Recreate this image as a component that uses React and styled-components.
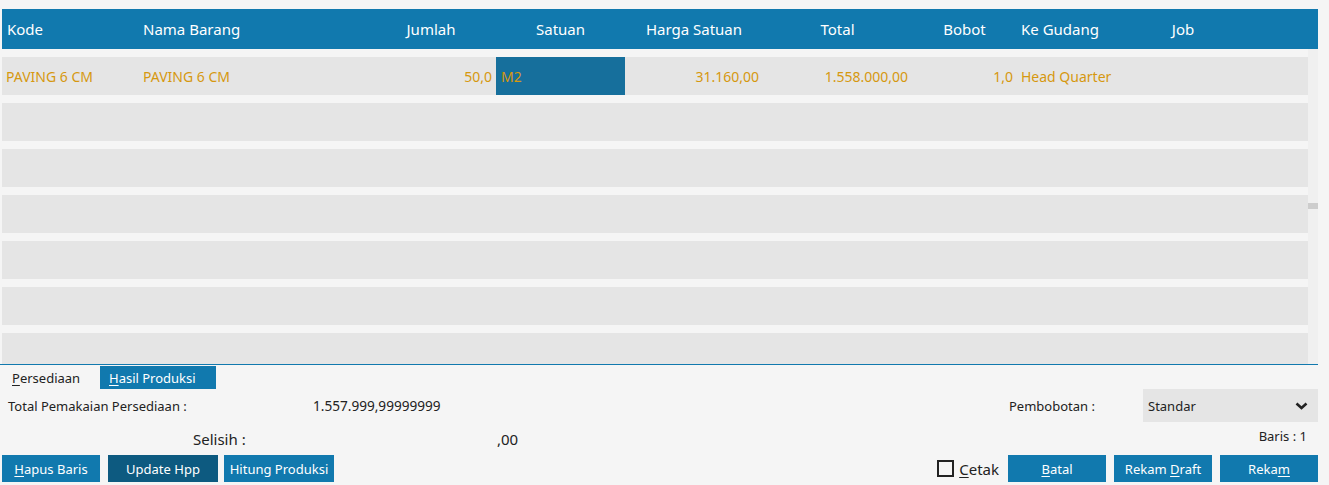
import React from "react";
import styled, { createGlobalStyle } from "styled-components";

const Global = createGlobalStyle`
  html, body { margin: 0; padding: 0; background: #f5f5f5; }
  body { font-family: "Segoe UI", "Noto Sans", "Open Sans", sans-serif; overflow: hidden; }
  * { box-sizing: border-box; }
`;

const COLS = "137px 227px 130px 129px 138px 149px 105px 87px 158px 1fr";

const Page = styled.div`
  width: 1329px;
  height: 485px;
  padding: 9px 11px 0 2px;
  display: flex;
  flex-direction: column;
`;

const Header = styled.div`
  display: grid;
  grid-template-columns: ${COLS};
  height: 40px;
  background: #1179ae;
  color: #fff;
  font-size: 15px;
  align-items: center;
`;

const HCell = styled.div`
  padding: 0 5px 0 ${(p) => p.$pl || 5}px;
  text-align: ${(p) => p.$align || "center"};
  white-space: nowrap;
`;

const Body = styled.div`
  display: flex;
  height: 315px;
  overflow: hidden;
`;

const Rows = styled.div`
  flex: 1;
  display: flex;
  flex-direction: column;
  gap: 8px;
  padding-top: 8px;
`;

const Row = styled.div`
  display: grid;
  grid-template-columns: ${COLS};
  height: 38px;
  flex: 0 0 38px;
  background: #e5e5e5;
  color: #d6980f;
  font-size: 14px;
  align-items: stretch;
`;

const Cell = styled.div`
  display: flex;
  align-items: center;
  justify-content: ${(p) => (p.$right ? "flex-end" : "flex-start")};
  padding: 0 4px 0 ${(p) => p.$pl || 4}px;
  white-space: nowrap;
  background: ${(p) => (p.$sel ? "#166f9c" : "transparent")};
`;

const Track = styled.div`
  width: 10px;
  background: #f0f0f0;
  display: flex;
  flex-direction: column;
  padding-top: 154px;
`;

const Thumb = styled.div`
  height: 6px;
  background: #cdcdcd;
`;

const Divider = styled.div`
  height: 1px;
  background: #1179ae;
  margin-left: -2px;
`;

const Tabs = styled.div`
  display: flex;
  height: 23px;
  margin-left: -2px;
  margin-top: 1px;
`;

const Tab = styled.div`
  width: ${(p) => p.$w}px;
  padding-left: ${(p) => p.$pl}px;
  display: flex;
  align-items: center;
  font-size: 13px;
  color: ${(p) => (p.$active ? "#fff" : "#222")};
  background: ${(p) => (p.$active ? "#1179ae" : "transparent")};
`;

const U = styled.span`
  text-decoration: underline;
  text-underline-offset: 2px;
`;

const Line1 = styled.div`
  display: flex;
  align-items: center;
  height: 33px;
`;

const Label = styled.div`
  font-size: ${(p) => p.$fs || 13}px;
  color: #222;
  width: ${(p) => p.$w}px;
  padding-left: ${(p) => p.$pl || 0}px;
  white-space: nowrap;
`;

const Spacer = styled.div`
  flex: 1;
`;

const Select = styled.div`
  width: 175px;
  height: 33px;
  background: #e5e5e5;
  display: flex;
  align-items: center;
  justify-content: space-between;
  padding: 0 10px 0 5px;
  font-size: 13px;
  color: #222;
`;

const Line2 = styled.div`
  display: flex;
  align-items: center;
  height: 33px;
`;

const Big = styled.div`
  font-size: 15px;
  color: #222;
  width: ${(p) => p.$w}px;
  padding-left: ${(p) => p.$pl || 0}px;
  white-space: nowrap;
`;

const Baris = styled.div`
  font-size: 13px;
  color: #222;
  padding-right: 11px;
  margin-top: -6px;
`;

const Buttons = styled.div`
  display: flex;
  align-items: center;
  height: 27px;
`;

const Btn = styled.div`
  width: ${(p) => p.$w}px;
  margin-right: ${(p) => p.$mr || 0}px;
  height: 27px;
  background: ${(p) => (p.$dark ? "#0d5a80" : "#1179ae")};
  color: #fff;
  font-size: 13px;
  display: flex;
  align-items: center;
  justify-content: center;
  white-space: nowrap;
`;

const Check = styled.div`
  width: 17px;
  height: 17px;
  border: 2px solid #222;
  margin-right: 5px;
`;

const CheckLabel = styled.div`
  font-size: 15px;
  color: #222;
  margin-right: 9px;
`;

const cols = [
  ["Kode", "left"],
  ["Nama Barang", "left", 4],
  ["Jumlah"],
  ["Satuan"],
  ["Harga Satuan"],
  ["Total"],
  ["Bobot"],
  ["Ke Gudang", "left", 4],
  ["Job"],
  [""],
];

export default function App() {
  return (
    <>
      <Global />
      <Page>
        <Header>
          {cols.map(([t, a, pl], i) => (
            <HCell key={i} $align={a} $pl={pl}>
              {t}
            </HCell>
          ))}
        </Header>
        <Body>
          <Rows>
            <Row>
              <Cell>PAVING 6 CM</Cell>
              <Cell>PAVING 6 CM</Cell>
              <Cell $right>50,0</Cell>
              <Cell $sel $pl={5}>M2</Cell>
              <Cell $right>31.160,00</Cell>
              <Cell $right>1.558.000,00</Cell>
              <Cell $right>1,0</Cell>
              <Cell>Head Quarter</Cell>
              <Cell />
              <Cell />
            </Row>
            {[0, 1, 2, 3, 4, 5].map((i) => (
              <Row key={i} />
            ))}
          </Rows>
          <Track>
            <Thumb />
          </Track>
        </Body>
        <Divider />
        <Tabs>
          <Tab $w={100} $pl={12}>
            <span><U>P</U>ersediaan</span>
          </Tab>
          <Tab $w={116} $pl={9} $active>
            <span><U>H</U>asil Produksi</span>
          </Tab>
        </Tabs>
        <Line1>
          <Label $w={311} $pl={6}>Total Pemakaian Persediaan :</Label>
          <Label $w={200} $fs={13.6}>1.557.999,99999999</Label>
          <Spacer />
          <Label $w={134}>Pembobotan :</Label>
          <Select>
            <span>Standar</span>
            <svg width="13" height="8" viewBox="0 0 13 8">
              <path d="M1.5 1.5 L6.5 6 L11.5 1.5" fill="none" stroke="#222" strokeWidth="2.6" />
            </svg>
          </Select>
        </Line1>
        <Line2>
          <Big $w={495} $pl={191}>Selisih :</Big>
          <Big $w={100}>,00</Big>
          <Spacer />
          <Baris>Baris : 1</Baris>
        </Line2>
        <Buttons>
          <Btn $w={98} $mr={8}><span><U>H</U>apus Baris</span></Btn>
          <Btn $w={110} $mr={6} $dark>Update Hpp</Btn>
          <Btn $w={110}>Hitung Produksi</Btn>
          <Spacer />
          <Check />
          <CheckLabel><U>C</U>etak</CheckLabel>
          <Btn $w={98} $mr={8}><span><U>B</U>atal</span></Btn>
          <Btn $w={98} $mr={8}><span>Rekam <U>D</U>raft</span></Btn>
          <Btn $w={98}><span>Reka<U>m</U></span></Btn>
        </Buttons>
      </Page>
    </>
  );
}
